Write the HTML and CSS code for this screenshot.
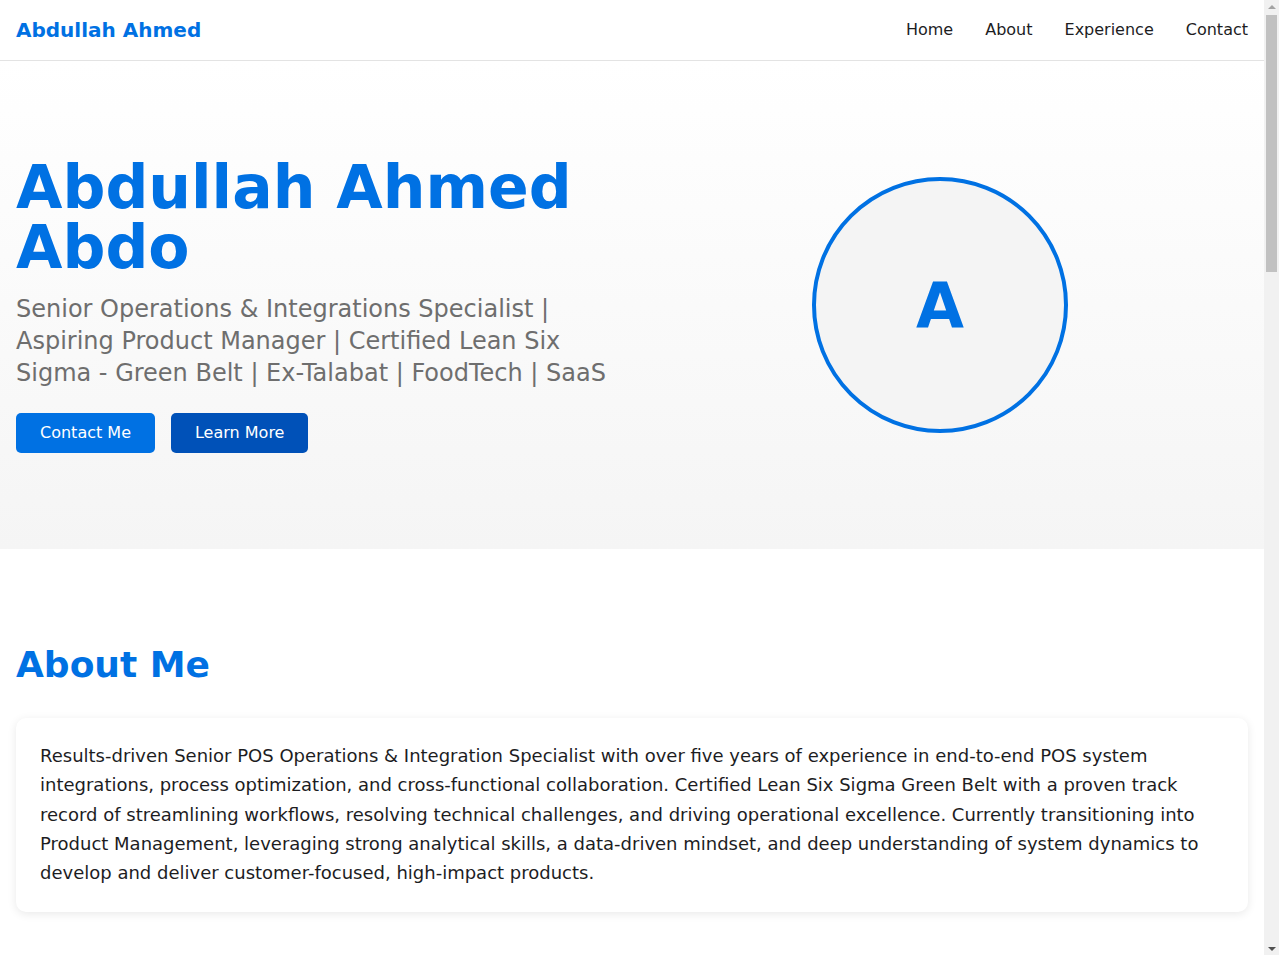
FILE: index.html
```html
<!DOCTYPE html>
<html lang="en">
<head>
<meta charset="utf-8">
<title>Abdullah Ahmed Abdo</title>
<link rel="stylesheet" href="styles.css">
</head>
<body>
<div class="page">
<header class="site-header">
  <a class="logo" href="#">Abdullah Ahmed</a>
  <nav class="nav">
    <a href="#home">Home</a>
    <a href="#about">About</a>
    <a href="#experience">Experience</a>
    <a href="#contact">Contact</a>
  </nav>
</header>

<section class="hero" id="home">
  <div class="hero-text">
    <h1 class="hero-title">Abdullah Ahmed Abdo</h1>
    <p class="hero-sub">Senior Operations &amp; Integrations Specialist | Aspiring Product Manager | Certified Lean Six Sigma - Green Belt | Ex-Talabat | FoodTech | SaaS</p>
    <div class="hero-actions">
      <a class="btn btn-primary" href="#contact">Contact Me</a>
      <a class="btn btn-dark" href="#about">Learn More</a>
    </div>
  </div>
  <div class="hero-visual">
    <div class="avatar">A</div>
  </div>
</section>

<section class="section" id="about">
  <h2 class="section-title">About Me</h2>
  <div class="card">
    <p class="card-text">Results-driven Senior POS Operations &amp; Integration Specialist with over five years of experience in end-to-end POS system integrations, process optimization, and cross-functional collaboration. Certified Lean Six Sigma Green Belt with a proven track record of streamlining workflows, resolving technical challenges, and driving operational excellence. Currently transitioning into Product Management, leveraging strong analytical skills, a data-driven mindset, and deep understanding of system dynamics to develop and deliver customer-focused, high-impact products.</p>
  </div>
</section>

<section class="section" id="experience">
  <h2 class="section-title">Experience</h2>
  <div class="card">
    <h3 class="job-title">Senior POS Operations &amp; Integration Specialist</h3>
    <p class="job-meta">Talabat</p>
    <p class="card-text">End-to-end POS system integrations, process optimization and cross-functional collaboration with partners and internal teams.</p>
  </div>
  <div class="card">
    <h3 class="job-title">POS Integration Specialist</h3>
    <p class="job-meta">FoodTech / SaaS</p>
    <p class="card-text">Resolved technical challenges, streamlined onboarding workflows and supported operational excellence initiatives.</p>
  </div>
</section>

<section class="section" id="contact">
  <h2 class="section-title">Contact</h2>
  <div class="card">
    <p class="card-text">Feel free to reach out for collaboration or opportunities.</p>
  </div>
</section>

<footer class="footer">© Abdullah Ahmed Abdo</footer>
</div>
<aside class="scrollbar" aria-hidden="true">
  <div class="sb-btn"><span class="sb-arrow sb-up"></span></div>
  <div class="sb-thumb"></div>
  <div class="sb-rest"></div>
  <div class="sb-btn"><span class="sb-arrow sb-down"></span></div>
</aside>
</body>
</html>
```

FILE: styles.css
```css
* {
  box-sizing: border-box;
}

html, body {
  margin: 0;
  padding: 0;
  height: 100%;
}

html {
  overflow: hidden;
}

body {
  overflow-y: scroll;
  display: flex;
  align-items: flex-start;
  font-family: "DejaVu Sans", Verdana, sans-serif;
  color: #222;
  background: #fff;
}

a {
  text-decoration: none;
  color: inherit;
}

.page {
  flex: 1;
  min-width: 0;
  min-height: 3437px;
  display: flex;
  flex-direction: column;
}

/* decorative scrollbar, as seen in the reference */
.scrollbar {
  position: sticky;
  top: 0;
  flex: 0 0 15px;
  width: 15px;
  height: 100vh;
  background: #f1f1f1;
  display: flex;
  flex-direction: column;
}

.sb-btn {
  height: 15px;
  display: flex;
  align-items: center;
  justify-content: center;
}

.sb-arrow {
  width: 0;
  height: 0;
  border-left: 4px solid transparent;
  border-right: 4px solid transparent;
}

.sb-up {
  border-bottom: 4px solid #a3a3a3;
  margin-top: -1px;
}

.sb-down {
  border-top: 4px solid #505050;
  margin-top: 2px;
}

.sb-thumb {
  height: 257px;
  margin: 0 2px;
  background: #c1c1c1;
}

.sb-rest {
  flex: 1;
}

.site-header {
  height: 61px;
  padding: 0 16px;
  display: flex;
  align-items: center;
  justify-content: space-between;
  border-bottom: 1px solid #e3e3e3;
  background: #fff;
}

.logo {
  font-size: 20px;
  font-weight: 700;
  color: #0071e3;
  padding-bottom: 1px;
}

.nav {
  display: flex;
  gap: 32px;
  padding-bottom: 2px;
}

.nav a {
  font-size: 16px;
  color: #1d1d1f;
}

.hero {
  display: flex;
  align-items: center;
  padding: 96px 16px;
  background: linear-gradient(180deg, #ffffff 0%, #f5f5f5 100%);
}

.hero-text,
.hero-visual {
  flex: 1 1 0;
  min-width: 0;
}

.hero-title {
  margin: 0 0 16px;
  font-size: 60px;
  line-height: 60px;
  font-weight: 700;
  color: #0071e3;
}

.hero-sub {
  margin: 0 0 24px;
  font-size: 24px;
  line-height: 32px;
  color: #6e6e6e;
}

.hero-actions {
  display: flex;
  gap: 16px;
}

.btn {
  display: inline-block;
  height: 40px;
  line-height: 40px;
  padding: 0 24px;
  border-radius: 5px;
  font-size: 16px;
  color: #fff;
}

.btn-primary {
  background: #0071e3;
}

.btn-dark {
  background: #0051b8;
}

.hero-visual {
  display: flex;
  justify-content: center;
}

.avatar {
  width: 256px;
  height: 256px;
  border-radius: 50%;
  border: 4px solid #0071e3;
  background: #f4f4f4;
  display: flex;
  align-items: center;
  justify-content: center;
  font-size: 62px;
  font-weight: 700;
  color: #0071e3;
}

.section {
  padding: 94px 16px 40px;
}

.section-title {
  margin: 0 0 32px;
  font-size: 36px;
  line-height: 1.2;
  font-weight: 700;
  color: #0071e3;
}

.card {
  background: #fff;
  border-radius: 10px;
  padding: 23px 24px 25px;
  box-shadow: 0 2px 10px rgba(0, 0, 0, 0.09);
  margin-bottom: 24px;
}

.card-text {
  margin: 0;
  font-size: 18px;
  line-height: 29.25px;
  color: #1d1d1f;
}

.job-title {
  margin: 0 0 6px;
  font-size: 22px;
  color: #1d1d1f;
}

.job-meta {
  margin: 0 0 12px;
  font-size: 16px;
  color: #6e6e6e;
}

.footer {
  margin-top: auto;
  padding: 40px 16px;
  text-align: center;
  color: #6e6e6e;
  font-size: 14px;
  border-top: 1px solid #e3e3e3;
}
```
